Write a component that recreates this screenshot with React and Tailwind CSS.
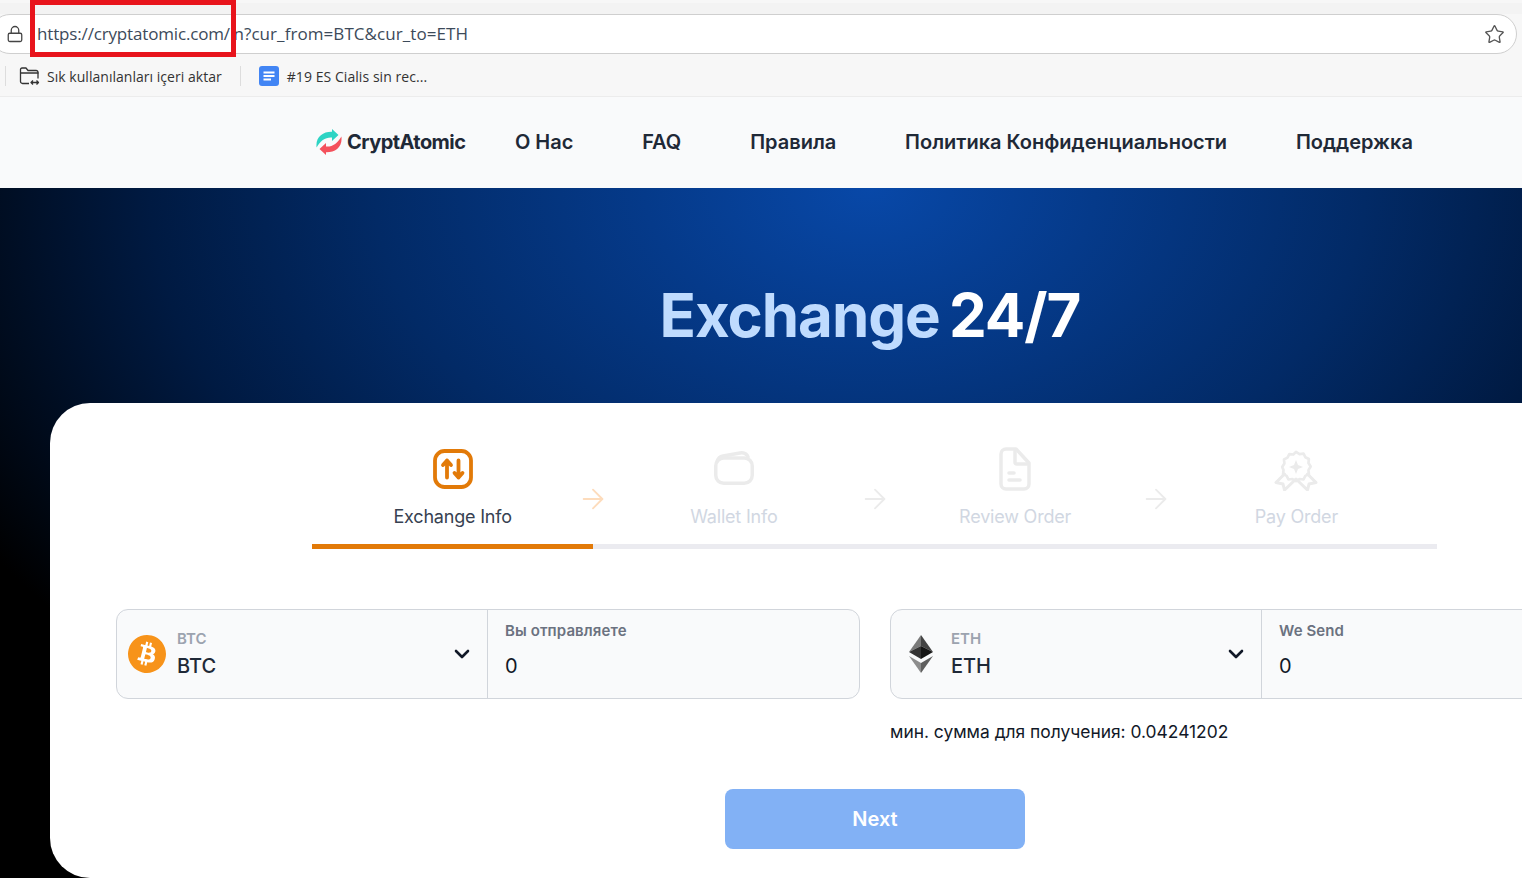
import { SiBitcoin } from "react-icons/si";
import { ChevronDown, Lock, Star, ArrowRight } from "lucide-react";

const NAV = ["О Нас", "FAQ", "Правила", "Политика Конфиденциальности", "Поддержка"];

const LOGO_ARROW = "M0.6 18.500C-0.8 8 7 2.500 16 2.800V0l6.500 6L16 12V8.500C9.500 8 4.500 11.500 0.6 18.500Z";

function LogoIcon() {
  return (
    <svg width="26" height="26" viewBox="0 0 26 26">
      <path d={LOGO_ARROW} fill="#2dd4c4" />
      <path d={LOGO_ARROW} fill="#f4515c" transform="rotate(180 13 13)" />
    </svg>
  );
}

function ExchangeIcon() {
  return (
    <svg width="42" height="42" viewBox="0 0 42 42" fill="none" stroke="#e27a08" strokeLinecap="round" strokeLinejoin="round">
      <rect x="3" y="3" width="36" height="36" rx="9.500" strokeWidth="3.800" />
      <path d="M15 29.500V12.500M11 17l4-4.500 4 4.500" strokeWidth="3.800" />
      <path d="M26.500 12.500v17M22.500 25l4 4.500 4-4.500" strokeWidth="3.800" />
    </svg>
  );
}

function WalletIcon() {
  return (
    <svg width="42" height="42" viewBox="0 0 42 42" fill="none" stroke="#ebebeb" strokeWidth="3.500" strokeLinejoin="round">
      <rect x="2.750" y="10" width="36.500" height="25.250" rx="8" />
      <path d="M4 14c1-4 3-5.500 6-6L27 5c4-.7 7 1 8.500 5" />
    </svg>
  );
}

function FileIcon() {
  return (
    <svg width="42" height="44" viewBox="0 0 42 44" fill="none" stroke="#ebebeb" strokeWidth="3.500" strokeLinejoin="round" strokeLinecap="round">
      <path d="M12 2h10l13 14v21a5 5 0 0 1-5 5H12a5 5 0 0 1-5-5V7a5 5 0 0 1 5-5Z" />
      <path d="M21 3v12a2 2 0 0 0 2 2h11" />
      <path d="M15 26h5M15 33h11" />
    </svg>
  );
}

function AwardIcon() {
  return (
    <svg width="44" height="44" viewBox="0 0 44 44" fill="none" stroke="#ebebeb" strokeWidth="3" strokeLinejoin="round" strokeLinecap="round">
      <path d="M22 3l4 2.500 4.500-.5 2 4 4 2-.5 4.500 2.500 4-2.500 4 .5 4.500-4 2-2 4-4.500-.5-4 2.500-4-2.500-4.500.5-2-4-4-2 .5-4.500L6.500 20 9 16l-.5-4.500 4-2 2-4 4.500.5L22 3Z" transform="translate(2.400 2.200) scale(.89)" />
      <path d="M22 13l2 5 5 2-5 2-2 5-2-5-5-2 5-2 2-5Z" fill="#ebebeb" stroke="none" />
      <path d="M10.500 27L2 35.500l7 1.500 1.500 6L22 32l11.500 11 1.500-6 7-1.500L33.500 27" />
    </svg>
  );
}

function EthIcon() {
  return (
    <svg width="24" height="38" viewBox="0 0 24 38">
      <polygon points="12,0 0,17 12,11" fill="#7a7a7a" />
      <polygon points="12,0 24,17 12,11" fill="#444444" />
      <polygon points="0,17 12,11 12,24" fill="#333333" />
      <polygon points="24,17 12,11 12,24" fill="#161616" />
      <polygon points="0,21 12,28 12,38" fill="#8d8d8d" />
      <polygon points="24,21 12,28 12,38" fill="#5f5f5f" />
    </svg>
  );
}

function Step({ icon, label, active, arrow }) {
  return (
    <div className={`relative w-1/4 h-[102px] flex flex-col items-center border-b-[5px] ${active ? "border-[#e27a08]" : "border-[#ebebf0]"}`}>
      <div className="h-[44px] flex items-center justify-center">{icon}</div>
      <span className={`mt-[12px] text-[18px] leading-[28px] tracking-[-0.2px] ${active ? "text-[#374151]" : "text-[#d1d7e2]"}`}>{label}</span>
      {arrow && (
        <ArrowRight
          size={32}
          strokeWidth={1.400}
          className={`absolute right-[-16px] top-[36px] ${active ? "text-[#fddcbc]" : "text-[#ebebeb]"}`}
        />
      )}
    </div>
  );
}

function ExchangeBox({ icon, ticker, inputLabel }) {
  return (
    <div className="w-[744px] h-[90px] shrink-0 flex rounded-xl border border-[#d1d5db] bg-[#f9fafb]">
      <div className="w-[371px] shrink-0 flex items-center border-r border-[#d1d5db] pl-[10px] pr-[15px]">
        <div className="w-[40px] h-[40px] flex items-center justify-center">{icon}</div>
        <div className="ml-[10px] flex-1">
          <div className="text-[15px] leading-[20px] font-semibold text-[#9ca3af]">{ticker}</div>
          <div className="mt-[3px] text-[20px] leading-[28px] font-medium text-[#1f2937]">{ticker}</div>
        </div>
        <ChevronDown size={24} strokeWidth={2.600} className="text-[#111827] mr-[-2px]" />
      </div>
      <div className="flex-1 pl-[17px] pt-[11px]">
        <div className="text-[15px] leading-[20px] font-semibold tracking-[0.1px] text-[#6b7280]">{inputLabel}</div>
        <div className="mt-[11px] text-[20px] leading-[28px] text-[#111827]">0</div>
      </div>
    </div>
  );
}

export default function App() {
  return (
    <div className="w-[1522px] h-[878px] overflow-hidden bg-white font-['Inter',sans-serif]">
      {/* browser chrome */}
      <div className="h-[97px] bg-[#f7f7f7] border-b border-[#ececec] pt-[3px] font-['Open_Sans',sans-serif]">
        <div className="h-[11px] bg-[#f3f3f3]" />
        <div className="h-[40px] ml-[-10px] mr-[5px] flex items-center rounded-full border border-[#cfcfcf] bg-white pl-[15px] pr-[11px]">
          <Lock size={18} strokeWidth={1.700} className="text-[#444]" />
          <span className="ml-[13px] text-[17px] text-[#3c4a5a] flex-1">
            <span className="tracking-[-0.16px]">https://cryptatomic.com/</span>
            <span className="tracking-[-6px] text-transparent">e</span>
            <span className="tracking-[0.07px]">n?cur_from=BTC&amp;cur_to=ETH</span>
          </span>
          <Star size={21} strokeWidth={1.500} className="text-[#555]" />
        </div>
        <div className="h-[42px] pt-[2px] flex items-center pl-[5px] text-[14px] text-[#333]">
          <div className="w-px h-[20px] bg-[#ddd]" />
          <svg className="ml-[13px]" width="21" height="19" viewBox="0 0 21 19" fill="none" stroke="#333" strokeWidth="1.300" strokeLinejoin="round">
            <path d="M10 16.500H3.500a2 2 0 0 1-2-2V2.500a1.500 1.500 0 0 1 1.500-1.500h4l2 2.500h8a2 2 0 0 1 2 2v6" />
            <path d="M1.500 6h18M12 15.500h7.500M14 13.500l-2 2 2 2M17.500 13.500l2 2-2 2" />
          </svg>
          <span className="ml-[7px] tracking-[0.03px]">Sık kullanılanları içeri aktar</span>
          <div className="ml-[18px] w-px h-[20px] bg-[#ddd]" />
          <svg className="ml-[18px]" width="20" height="20" viewBox="0 0 20 20">
            <rect width="20" height="20" rx="3" fill="#4285f4" />
            <path d="M4.500 5.500h11v2h-11zM4.500 9h11v2h-11zM4.500 12.500h7.500v2H4.500z" fill="#fff" />
          </svg>
          <span className="ml-[8px] tracking-[0.06px]">#19 ES Cialis sin rec...</span>
        </div>
      </div>

      {/* site nav */}
      <nav className="h-[91px] pb-[2px] bg-[#f9fafb] flex items-center pl-[316px] text-[20px] font-semibold text-[#1f2937]">
        <LogoIcon />
        <span className="ml-[5px] font-bold tracking-[-0.55px]">CryptAtomic</span>
        <div className="ml-[49.500px] flex gap-[68.800px]">
          {NAV.map((item) => (
            <span key={item}>{item}</span>
          ))}
        </div>
      </nav>

      {/* hero + card */}
      <div className="h-[690px] bg-[radial-gradient(ellipse_900px_600px_at_870px_0px,#0848a8_0%,#053a8a_25%,#022a66_55%,#001a42_80%,#000000_115%)]">
        <div className="h-[215px] flex items-center justify-center">
          <h1 className="ml-[218px] pt-[38px] text-[60px] leading-none font-bold tracking-[-1.030px] [word-spacing:-4px] text-white">
            <span className="text-[#bfdbfe]">Exchange</span> 24/7
          </h1>
        </div>
        <div className="ml-[50px] w-[1700px] h-[475px] rounded-tl-[40px] rounded-bl-[40px] bg-white pt-[44px]">
          <div className="ml-[262px] w-[1125px] flex">
            <Step icon={<ExchangeIcon />} label="Exchange Info" active arrow />
            <Step icon={<WalletIcon />} label="Wallet Info" arrow />
            <Step icon={<FileIcon />} label="Review Order" arrow />
            <Step icon={<AwardIcon />} label="Pay Order" />
          </div>

          <div className="mt-[60px] ml-[66px] flex gap-[30px]">
            <ExchangeBox
              icon={
                <span className="w-[38px] h-[38px] rounded-full bg-white flex items-center justify-center">
                  <SiBitcoin size={38} className="text-[#f7931a]" />
                </span>
              }
              ticker="BTC"
              inputLabel="Вы отправляете"
            />
            <ExchangeBox icon={<EthIcon />} ticker="ETH" inputLabel="We Send" />
          </div>

          <p className="mt-[19px] ml-[840px] text-[17.400px] leading-[28px] text-[#111827]">мин. сумма для получения: 0.04241202</p>

          <button className="mt-[43px] ml-[675px] block w-[300px] h-[60px] rounded-lg bg-[#82b1f5] text-[20px] font-semibold text-white">
            Next
          </button>
        </div>
      </div>

      {/* red annotation from the screenshot */}
      <div className="absolute left-[30px] top-0 w-[206px] h-[57px] border-[5px] border-[#e8141c]" />
    </div>
  );
}
